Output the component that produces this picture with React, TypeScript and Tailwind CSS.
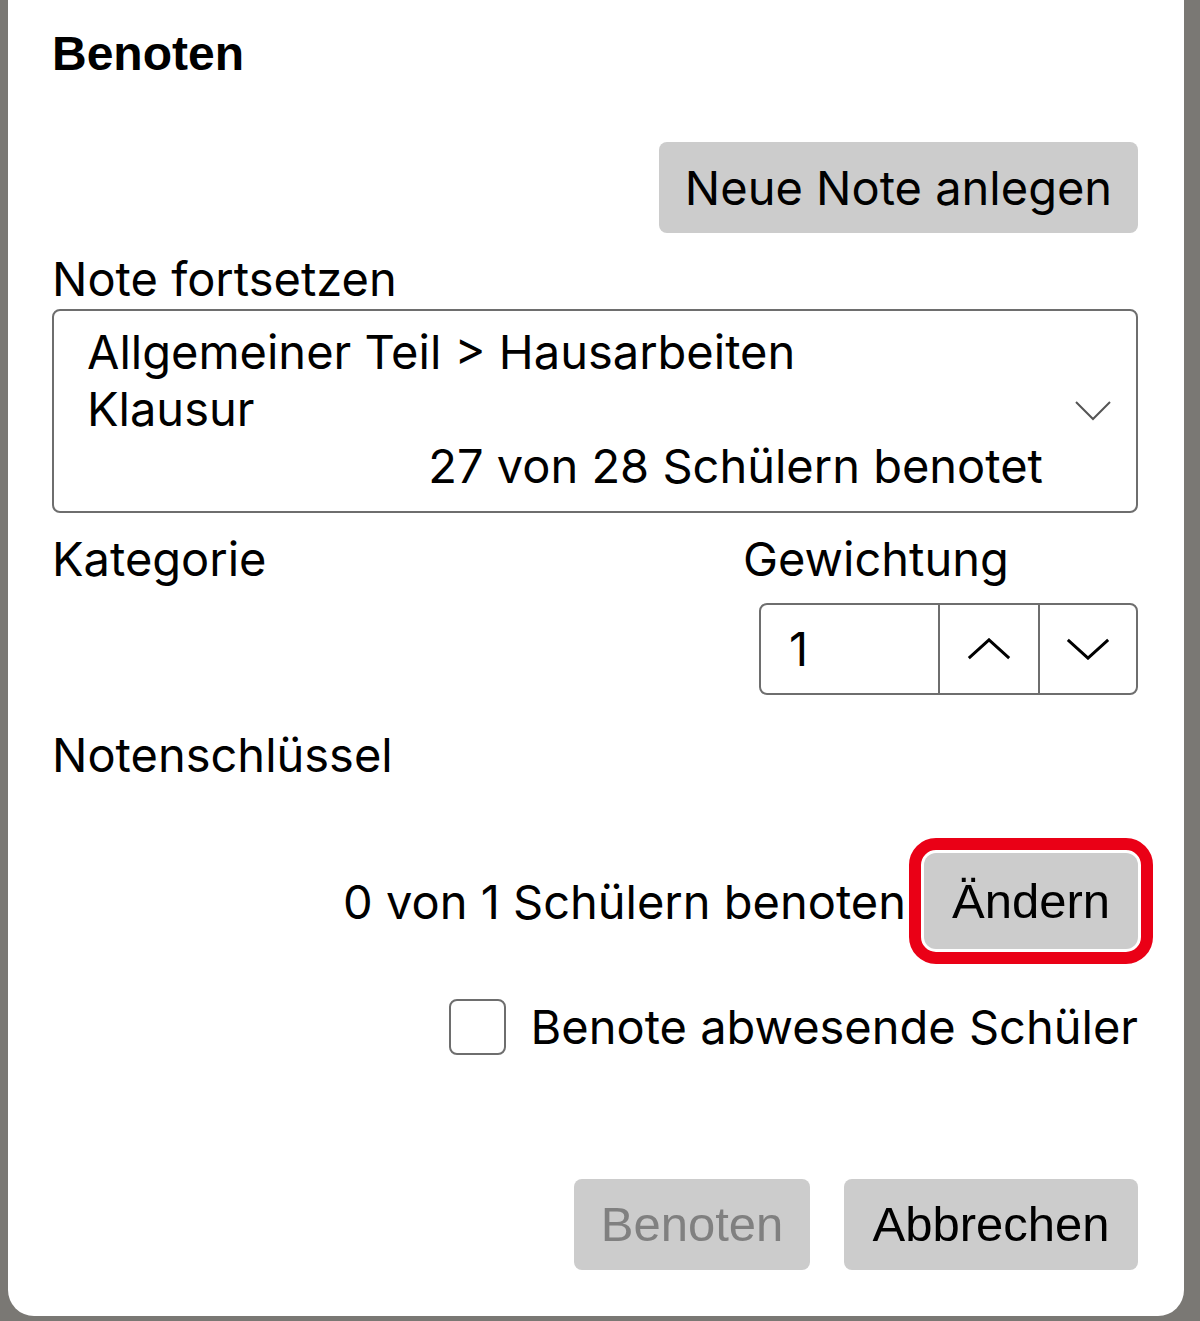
import React from 'react'

const inter = { fontFamily: 'Inter, "Noto Sans", sans-serif' }
const helv = { fontFamily: '"Liberation Sans", Arial, sans-serif' }

function Chevron({ dir, className }: { dir: 'up' | 'down'; className?: string }) {
  // plain open chevron, drawn as a single stroke
  return (
    <svg viewBox="0 0 48 24" className={className} fill="none" stroke="currentColor">
      {dir === 'up' ? (
        <path d="M2 22 L24 2 L46 22" strokeWidth={3.2} />
      ) : (
        <path d="M2 2 L24 22 L46 2" strokeWidth={3.2} />
      )}
    </svg>
  )
}

export default function App() {
  return (
    <div className="h-[1321px] w-[1200px] bg-[#7a7874]">
      <div
        className="ml-[8px] h-[1316px] w-[1176px] rounded-b-[26px] bg-white pl-[44px] pr-[46px] text-black"
        style={inter}
      >
        {/* Title */}
        <h1 className="pt-[30px] text-[48px] font-bold leading-[47px]" style={helv}>
          Benoten
        </h1>

        {/* New grade */}
        <div className="mt-[65px] flex justify-end">
          <button className="h-[91px] w-[479px] rounded-[8px] bg-[#cccccc] text-[47px] leading-none">
            Neue Note anlegen
          </button>
        </div>

        {/* Continue grade */}
        <div className="mt-[17px] text-[47px] leading-[57px]">Note fortsetzen</div>
        <div className="mt-[2px] flex h-[204px] rounded-[8px] border-2 border-[#6e6e6e]">
          <div className="flex-1 pl-[33px] pt-[12px] text-[47px] leading-[57px]">
            <div>Allgemeiner Teil &gt; Hausarbeiten</div>
            <div>Klausur</div>
            <div className="text-right">27 von 28 Schülern benotet</div>
          </div>
          <div className="flex w-[93px] items-center justify-center">
            <svg viewBox="0 0 36 20" className="ml-[6px] h-[20px] w-[36px] text-[#555]" fill="none" stroke="currentColor">
              <path d="M1 1 L18 18 L35 1" strokeWidth={2} />
            </svg>
          </div>
        </div>

        {/* Category / weight */}
        <div className="mt-[17px] flex">
          <div className="w-[691px] text-[47px] leading-[57px]">Kategorie</div>
          <div className="flex-1">
            <div className="text-[47px] leading-[57px]">Gewichtung</div>
            <div className="mt-[16px] flex justify-end">
              <div className="flex h-[92px] w-[379px] rounded-[8px] border-2 border-[#6e6e6e]">
                <div className="flex w-[177px] items-center pl-[28px] text-[47px]">1</div>
                <button className="flex w-[100px] items-center justify-center border-l-2 border-[#6e6e6e]">
                  <Chevron dir="up" className="h-[22px] w-[48px]" />
                </button>
                <button className="flex flex-1 items-center justify-center border-l-2 border-[#6e6e6e]">
                  <Chevron dir="down" className="h-[22px] w-[48px]" />
                </button>
              </div>
            </div>
          </div>
        </div>

        {/* Grading key */}
        <div className="mt-[31px] text-[47px] leading-[57px]">Notenschlüssel</div>

        <div className="mt-[70px] flex items-center justify-end">
          <span className="mr-[18px] text-[47px] leading-[57px]">0 von 1 Schülern benoten</span>
          <button
            className="h-[96px] w-[214px] rounded-[12px] bg-[#cccccc] text-[49px] leading-none outline-[12px] outline-offset-[3px] outline-[#ea0016] outline-solid"
            style={helv}
          >
            Ändern
          </button>
        </div>

        {/* Absent students */}
        <label className="mt-[49px] flex items-center justify-end">
          <span className="h-[56px] w-[57px] rounded-[8px] border-2 border-[#6e6e6e]" />
          <span className="ml-[25px] text-[47px] leading-[57px]">Benote abwesende Schüler</span>
        </label>

        {/* Footer */}
        <div className="mt-[124px] flex justify-end gap-[34px]" style={helv}>
          <button disabled className="h-[91px] w-[236px] rounded-[8px] bg-[#cccccc] text-[49px] leading-none text-[#808080]">
            Benoten
          </button>
          <button className="h-[91px] w-[294px] rounded-[8px] bg-[#cccccc] text-[49px] leading-none">
            Abbrechen
          </button>
        </div>
      </div>
    </div>
  )
}
